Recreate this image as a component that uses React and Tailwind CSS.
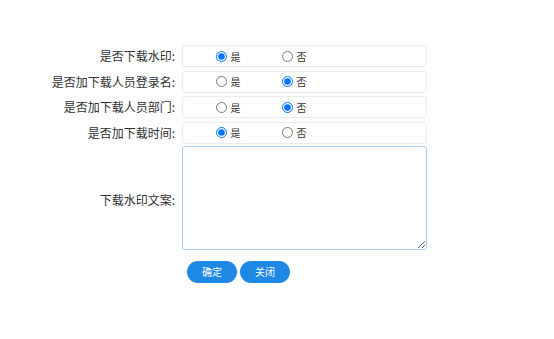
const rows = [
  { label: '是否下载水印:', value: 'yes' },
  { label: '是否加下载人员登录名:', value: 'no' },
  { label: '是否加下载人员部门:', value: 'no' },
  { label: '是否加下载时间:', value: 'yes' },
];

function RadioRow({ name, value }) {
  return (
    <div className="flex h-[22px] w-[245px] items-center rounded-[3px] border border-[#e9ecf1] bg-white pl-[33px]">
      <label className="flex w-[66px] items-center gap-[4px] text-[10px] text-[#333]">
        <input type="radio" name={name} defaultChecked={value === 'yes'} className="m-0 h-[11px] w-[11px]" />
        是
      </label>
      <label className="flex items-center gap-[4px] text-[10px] text-[#333]">
        <input type="radio" name={name} defaultChecked={value === 'no'} className="m-0 h-[11px] w-[11px]" />
        否
      </label>
    </div>
  );
}

export default function App() {
  return (
    <div className="h-[339px] w-[554px] bg-white pt-[45px] font-['Noto_Sans_CJK_SC',sans-serif] text-[12px] text-[#303133]">
      <div className="flex flex-col gap-[3.5px]">
        {rows.map((row, i) => (
          <div key={i} className="flex items-center">
            <div className="w-[175px] text-right leading-none">{row.label}</div>
            <div className="ml-[6.5px]">
              <RadioRow name={`r${i}`} value={row.value} />
            </div>
          </div>
        ))}
      </div>

      {/* textarea */}
      <div className="mt-[2px] flex items-center">
        <div className="w-[175px] pt-[4px] text-right leading-none">下载水印文案:</div>
        <textarea className="ml-[6.5px] h-[104px] w-[245px] rounded-[3px] border border-[#a5cbf6] bg-white outline-none" />
      </div>

      <div className="mt-[11px] flex gap-[3px] pl-[187px]">
        <button className="h-[22px] w-[50px] rounded-full bg-[#1e88e5] text-[10px] text-white">确定</button>
        <button className="h-[22px] w-[50px] rounded-full bg-[#1e88e5] text-[10px] text-white">关闭</button>
      </div>
    </div>
  );
}
